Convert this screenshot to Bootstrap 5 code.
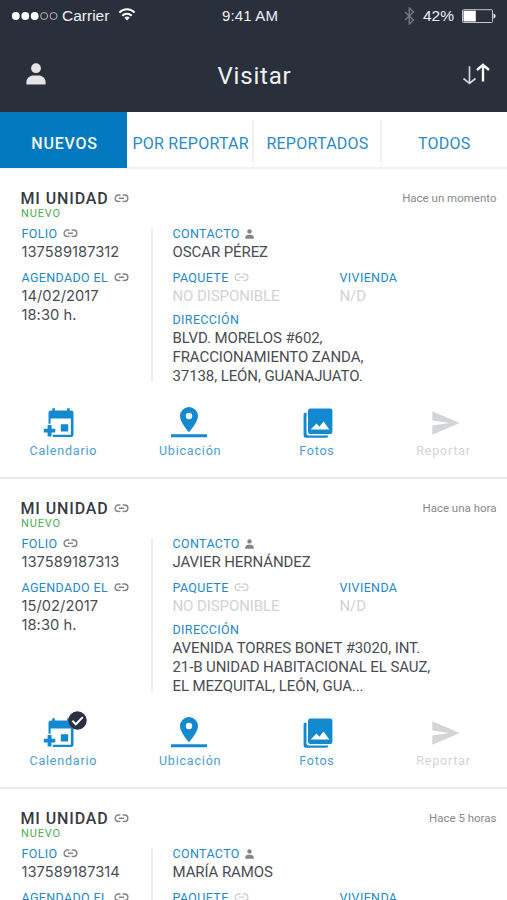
<!DOCTYPE html>
<html lang="es">
<head>
<meta charset="utf-8">
<meta name="viewport" content="width=device-width, initial-scale=1">
<title>Visitar</title>
<link href="https://cdn.jsdelivr.net/npm/bootstrap@5.3.0/dist/css/bootstrap.min.css" rel="stylesheet">
<style>
  body { font-family: Roboto, "Liberation Sans", sans-serif; color: #4a4d52; background: #fff; height: 900px; }
  svg { display: block; flex: none; }
  .app-header { background: #29303b; color: #eef0f3; height: 112px; }
  .status-bar { height: 32px; padding: 0 11px 0 12px; font-size: 15.5px; line-height: 32px; }
  .status-side { flex: 1 1 0; }
  .status-side, .status-time { font-family: "Liberation Sans", Arial, sans-serif; }
  .status-time { font-size: 15px; letter-spacing: .15px; padding-right: 8px; }
  .title-bar { height: 80px; padding: 3px 17px 0 26px; }
  .title-bar h1 { font-size: 24px; font-weight: 400; letter-spacing: .8px; line-height: 30px; padding: 5px 7px 0 0; }
  .title-side { flex: 1 1 0; }
  .tab-strip { height: 57px; border-bottom: 2px solid #f0f0f0; }
  .tab-strip .nav-link { color: #2a8bcb; font-size: 16px; letter-spacing: .25px; line-height: 24px; padding: 7px 0 0; border-radius: 0; white-space: nowrap; height: 56px; }
  .tab-strip .nav-link.active { background: #0278be; color: #f2f9fd; font-weight: 500; letter-spacing: .75px; padding-left: 2px; }
  .tab-strip .nav-item { flex: 1 1 0; }
  .tab-strip .nav-item:first-child { flex: 0 0 127px; }
  .tab-strip .ruled { border-right: 2px solid #f0f0f0; height: 42px; margin-top: 8px; }
  .tab-strip .ruled .nav-link { height: 42px; padding-top: 6px; padding-left: 1px; }
  .tab-strip .wide .nav-link { padding-left: 2px; }
  .visit { height: 310px; border-bottom: 2px solid #e9e9e9; padding-top: 20px; }
  .visit-head { padding: 0 10.5px 0 20.5px; }
  .unit { font-size: 16px; font-weight: 500; letter-spacing: .88px; line-height: 19px; color: #373b42; }
  .state { font-size: 11px; letter-spacing: .85px; line-height: 11px; color: #4caf50; padding-left: .5px; margin-top: -.5px; }
  .ago { font-size: 11.5px; line-height: 19px; color: #8a8a8a; }
  .visit-body { height: 154px; margin-top: 9.5px; }
  .schedule { width: 153px; padding-left: 21.5px; border-right: 2px solid #eee; }
  .details { padding-left: 19.5px; }
  .field-name { font-size: 12.5px; letter-spacing: .36px; line-height: 14px; color: #2389cd; margin-top: -1.500px; }
  .field-value { font-size: 15px; letter-spacing: -.09px; line-height: 19px; margin-top: 2px; white-space: nowrap; }
  .field-value.digits { font-family: Inter, Roboto, sans-serif; font-size: 14.7px; letter-spacing: .03px; }
  .next-row { margin-top: 9px; }
  .empty { color: #d2d3d4; }
  .glyph-link { color: #858585; margin-left: 5.5px; }
  .glyph-link.empty { color: #d2d3d4; }
  .col-package { width: 167px; }
  .address { margin-top: 8.5px; }
  .visit-actions { margin-top: 23.5px; }
  .act { flex: 1 1 0; color: #138ad0; font-size: 12.5px; letter-spacing: .8px; line-height: 15px; text-decoration: none; }
  .act span { color: #4a9dd6; }
  .act .icon-slot { height: 34px; position: relative; margin-bottom: 3px; }
  .act .pull-left { margin-right: 9px; }
  .act .pull-pin { margin-right: 2px; }
  .act .push-small { margin-left: 2px; }
  .act .push-right { margin-left: 5px; }
  .act.off, .act.off span { color: #d3d5d7; }
  .done { position: absolute; left: 25px; top: -5px; }
</style>
<script src="https://cdn.jsdelivr.net/npm/bootstrap@5.3.0/dist/js/bootstrap.bundle.min.js"></script>
</head>
<body class="overflow-hidden">

<svg width="0" height="0" class="d-none">
  <symbol id="i-link" viewBox="0 0 14 8"><path d="M6 1H4a3 3 0 0 0 0 6h2M8 1h2a3 3 0 0 1 0 6H8M4.500 4h5" fill="none" stroke="currentColor" stroke-width="1.300"/></symbol>
  <symbol id="i-person" viewBox="0 0 20 22"><circle cx="10" cy="5.200" r="4.900" fill="currentColor"/><path d="M.4 21.500v-2.400c0-4.400 3.600-6.700 7.200-6.700h4.800c3.600 0 7.200 2.300 7.200 6.700v2.400z" fill="currentColor"/></symbol>
  <symbol id="i-cal" viewBox="0 0 32 30"><path d="M5.500 15.800V4.700A2.200 2.200 0 0 1 7.700 2.500H9.300V.3h2.600v2.200h12.200V.3h2.600v2.200h1.600a2.200 2.200 0 0 1 2.200 2.200v22.100a2.200 2.200 0 0 1-2.200 2.200H9.800v-2.300h18.100V10.500H7.600v5.300z" fill="currentColor"/><path d="M17.800 16.200h7.400v7.200h-7.400zM4.600 17h3.900v3.700h3.800v3.800H8.500v3.900H4.600v-3.900H.8v-3.800h3.800z" fill="currentColor"/></symbol>
  <symbol id="i-pin" viewBox="0 0 36 32"><path fill-rule="evenodd" d="M18 0a9 9 0 0 0-9 9c0 6.400 9 16.300 9 16.300S27 15.400 27 9a9 9 0 0 0-9-9zm0 5.800a3.200 3.200 0 1 1 0 6.400 3.200 3.200 0 0 1 0-6.400z" fill="currentColor"/><path d="M0 27.200h36v3H0z" fill="currentColor"/></symbol>
  <symbol id="i-photo" viewBox="0 0 30 30"><path fill-rule="evenodd" d="M7.200.5h20A2.200 2.200 0 0 1 29.400 2.700v21a2.200 2.200 0 0 1-2.200 2.200H7.200A2.200 2.200 0 0 1 5 23.700V2.700A2.200 2.200 0 0 1 7.200.5zM7.700 21.500h18.600l-5.700-8-4.200 5.200-2.900-3.100z" fill="currentColor"/><path d="M.6 5.700A2 2 0 0 1 2 4.700h1.500v20.500a2.200 2.200 0 0 0 2.200 2.200h19.600v.3a2 2 0 0 1-2 2H2.800a2.200 2.200 0 0 1-2.200-2.200z" fill="currentColor"/></symbol>
  <symbol id="i-send" viewBox="0 0 28 24"><path d="M.3.200 27.800 12 .3 23.800v-9.200L17.500 12 .3 9.400z" fill="currentColor"/></symbol>
</svg>

<header class="app-header">
  <div class="status-bar d-flex align-items-center">
    <div class="status-side d-flex align-items-center">
      <svg width="46" height="10" viewBox="0 0 46 10"><g fill="#fff"><circle cx="3.800" cy="5" r="3.900"/><circle cx="13.300" cy="5" r="3.900"/><circle cx="22.700" cy="5" r="3.900"/></g><g fill="none" stroke="#bfc3c8" stroke-width=".9"><circle cx="32.100" cy="5" r="3.500"/><circle cx="41.500" cy="5" r="3.500"/></g></svg>
      <span class="ms-1">Carrier</span>
      <svg width="20" height="13" viewBox="0 0 20 13" class="ms-2 mb-1"><g fill="none" stroke="#fff" stroke-width="2"><path d="M2.400 4.700a10.300 10.300 0 0 1 15.200 0M5.300 7.700a6.500 6.500 0 0 1 9.400 0"/></g><path d="M7.400 9.700a3.700 3.700 0 0 1 5.200 0L10 12.600z" fill="#fff"/></svg>
    </div>
    <div class="status-time">9:41 AM</div>
    <div class="status-side d-flex align-items-center justify-content-end">
      <svg width="11" height="18" viewBox="0 0 11 18"><path d="M1 5l8.500 8L5.300 17V1l4.200 4L1 13" fill="none" stroke="#747a83" stroke-width="1.400"/></svg>
      <span class="ms-2 me-2">42%</span>
      <svg width="34" height="14" viewBox="0 0 34 14"><rect x=".5" y=".7" width="30" height="12.800" rx="1" fill="none" stroke="#c3c6ca"/><path d="M1.500 1.700h12.300v10.800H1.500z" fill="#fff"/><path d="M31.500 4.500c2.800.7 2.800 4.500 0 5.200z" fill="#e7e8ea"/></svg>
    </div>
  </div>
  <div class="title-bar d-flex align-items-center">
    <div class="title-side"><svg width="20" height="22" color="#e4e4e4"><use href="#i-person"/></svg></div>
    <h1 class="m-0">Visitar</h1>
    <div class="title-side d-flex justify-content-end">
      <svg width="28" height="22" viewBox="0 0 28 22"><path d="M7.500 3.200v17M1.500 15.500l6 5 6-5" fill="none" stroke="#d0d3d7" stroke-width="1.700"/><path d="M21 18.500V2M15 7l6-5.200L27 7" fill="none" stroke="#fff" stroke-width="2.400"/></svg>
    </div>
  </div>
</header>

<ul class="nav tab-strip flex-nowrap">
  <li class="nav-item"><a class="nav-link active d-flex align-items-center justify-content-center" href="#">NUEVOS</a></li>
  <li class="nav-item ruled wide"><a class="nav-link d-flex align-items-center justify-content-center" href="#">POR REPORTAR</a></li>
  <li class="nav-item ruled"><a class="nav-link d-flex align-items-center justify-content-center" href="#">REPORTADOS</a></li>
  <li class="nav-item"><a class="nav-link d-flex align-items-center justify-content-center" href="#">TODOS</a></li>
</ul>

<main id="visits"></main>

<script>
  const visits = [
    { ago: 'Hace un momento', folio: '137589187312', date: '14/02/2017', name: 'OSCAR PÉREZ', address: ['BLVD. MORELOS #602,', 'FRACCIONAMIENTO ZANDA,', '37138, LEÓN, GUANAJUATO.'] },
    { ago: 'Hace una hora', folio: '137589187313', date: '15/02/2017', name: 'JAVIER HERNÁNDEZ', address: ['AVENIDA TORRES BONET #3020, INT.', '21-B UNIDAD HABITACIONAL EL SAUZ,', 'EL MEZQUITAL, LEÓN, GUA...'], done: true },
    { ago: 'Hace 5 horas', folio: '137589187314', name: 'MARÍA RAMOS' }
  ];
  const icon = (id, w, h, cls = '') => `<svg width="${w}" height="${h}" class="${cls}"><use href="#i-${id}"/></svg>`;
  const chain = (cls = '') => icon('link', 15, 8.5, 'glyph-link ' + cls);
  const tick = '<svg class="done" width="19" height="19" viewBox="0 0 19 19"><circle cx="9.500" cy="9.500" r="9.200" fill="#2b3040"/><path d="M4.300 9.700l3.500 3.600 7-7.200" fill="none" stroke="#fff" stroke-width="2"/></svg>';
  const action = (label, art, off) => `<a href="#" class="act d-flex flex-column align-items-center ${off ? 'off' : ''}"><div class="icon-slot d-flex align-items-center">${art}</div><span>${label}</span></a>`;

  document.getElementById('visits').innerHTML = visits.map(v => `
    <section class="visit">
      <div class="visit-head d-flex justify-content-between">
        <div>
          <div class="unit d-flex align-items-center">MI UNIDAD ${chain()}</div>
          <div class="state">NUEVO</div>
        </div>
        <div class="ago">${v.ago}</div>
      </div>
      <div class="visit-body d-flex">
        <div class="schedule">
          <div class="field-name d-flex align-items-center">FOLIO ${chain()}</div>
          <div class="field-value digits">${v.folio}</div>
          <div class="field-name next-row d-flex align-items-center">AGENDADO EL ${chain()}</div>
          ${v.date ? `<div class="field-value digits">${v.date}<br>18:30 h.</div>` : ''}
        </div>
        <div class="details">
          <div class="field-name d-flex align-items-center">CONTACTO ${icon('person', 9, 10, 'glyph-link')}</div>
          <div class="field-value">${v.name}</div>
          <div class="d-flex">
            <div class="col-package">
              <div class="field-name next-row d-flex align-items-center">PAQUETE ${chain('empty')}</div>
              ${v.date ? '<div class="field-value empty">NO DISPONIBLE</div>' : ''}
            </div>
            <div>
              <div class="field-name next-row">VIVIENDA</div>
              ${v.date ? '<div class="field-value empty">N/D</div>' : ''}
            </div>
          </div>
          ${v.address ? `<div class="address">
            <div class="field-name">DIRECCIÓN</div>
            <div class="field-value">${v.address.join('<br>')}</div>
          </div>` : ''}
        </div>
      </div>
      ${v.date ? `<div class="visit-actions d-flex">
        ${action('Calendario', icon('cal', 32, 30, 'pull-left') + (v.done ? tick : ''))}
        ${action('Ubicación', icon('pin', 36, 32, 'pull-pin'))}
        ${action('Fotos', icon('photo', 30, 30, 'push-small'))}
        ${action('Reportar', icon('send', 28, 24, 'push-right'), true)}
      </div>` : ''}
    </section>`).join('');
</script>
</body>
</html>
